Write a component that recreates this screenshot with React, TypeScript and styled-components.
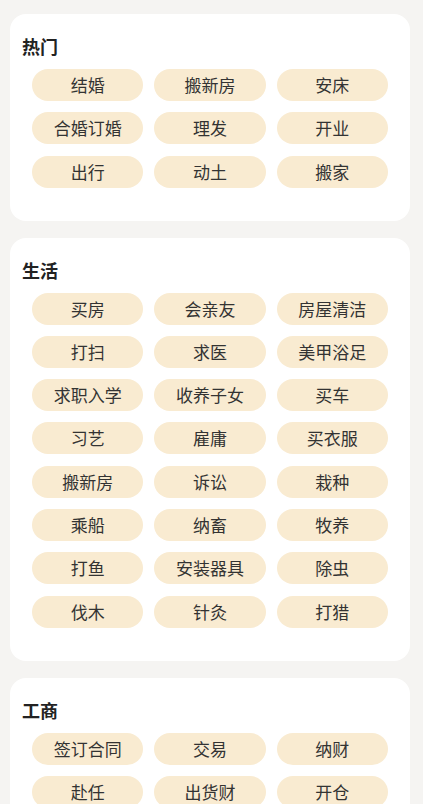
import React from 'react';
import styled, { createGlobalStyle } from 'styled-components';

const GlobalStyle = createGlobalStyle`
  html, body {
    margin: 0;
    padding: 0;
    background-color: #f5f4f2;
    font-family: "Noto Sans CJK SC", "Noto Sans", sans-serif;
  }
`;

const Page = styled.div`
  display: flex;
  flex-direction: column;
  gap: 17px;
  padding: 14px 0 20px 10px;
  width: 400px;
`;

const Card = styled.section`
  background-color: #ffffff;
  border-radius: 16px;
  padding: 20px 12px 33px;
`;

const CardTitle = styled.h3`
  margin: 0 0 11px;
  font-size: 18px;
  line-height: 24px;
  font-weight: 700;
  color: #222222;
`;

const TagGrid = styled.div`
  display: grid;
  grid-template-columns: repeat(3, 1fr);
  column-gap: 11px;
  row-gap: 11.3px;
  padding: 0 10px;
`;

const Tag = styled.div`
  height: 32px;
  line-height: 32px;
  border-radius: 16px;
  background-color: #f9ebd1;
  color: #333333;
  font-size: 17px;
  text-align: center;
  white-space: nowrap;
`;

const sections = [
  {
    title: '热门',
    items: ['结婚', '搬新房', '安床', '合婚订婚', '理发', '开业', '出行', '动土', '搬家'],
  },
  {
    title: '生活',
    items: [
      '买房', '会亲友', '房屋清洁',
      '打扫', '求医', '美甲浴足',
      '求职入学', '收养子女', '买车',
      '习艺', '雇庸', '买衣服',
      '搬新房', '诉讼', '栽种',
      '乘船', '纳畜', '牧养',
      '打鱼', '安装器具', '除虫',
      '伐木', '针灸', '打猎',
    ],
  },
  {
    title: '工商',
    items: ['签订合同', '交易', '纳财', '赴任', '出货财', '开仓', '开市', '立券', '置产'],
  },
];

export default function App() {
  return (
    <>
      <GlobalStyle />
      <Page>
        {sections.map(({ title, items }) => (
          <Card key={title}>
            <CardTitle>{title}</CardTitle>
            <TagGrid>
              {items.map((item, key) => (
                <Tag key={key}>{item}</Tag>
              ))}
            </TagGrid>
          </Card>
        ))}
      </Page>
    </>
  );
}
